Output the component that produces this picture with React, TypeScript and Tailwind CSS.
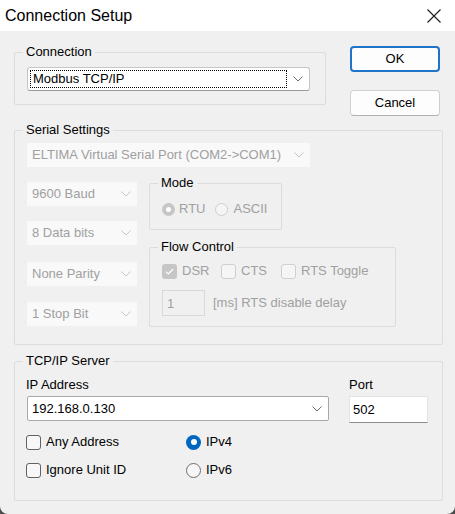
import type { ReactNode } from "react";
import clsx from "clsx";

const font = { fontFamily: '"Liberation Sans", Arial, sans-serif' };

function Chevron({ light }: { light?: boolean }) {
  return (
    <svg width="10" height="6" viewBox="0 0 10 6" className="shrink-0">
      <polyline
        points="0.5,0.5 5,5 9.5,0.5"
        fill="none"
        stroke={light ? "#c4c4c4" : "#6b6b6b"}
        strokeWidth="1"
      />
    </svg>
  );
}

function GroupBox({
  label,
  className,
  children,
}: {
  label: string;
  className?: string;
  children: ReactNode;
}) {
  return (
    <fieldset className={clsx("min-w-0 border border-[#dcdcdc] rounded-[2px]", className)}>
      <legend className="-ml-[4px] px-[3px] leading-4 text-[13px] text-black">{label}</legend>
      {children}
    </fieldset>
  );
}

// disabled combo (serial settings)
function DisabledCombo({ value, className }: { value: string; className?: string }) {
  return (
    <div
      className={clsx(
        "h-[24px] bg-[#f9f9f9] flex items-center justify-between pl-[5px] pr-[6px] text-[13px] text-[#a0a0a0]",
        className
      )}
    >
      <span>{value}</span>
      <Chevron light />
    </div>
  );
}

function Radio({ checked, disabled, size = 13 }: { checked?: boolean; disabled?: boolean; size?: number }) {
  if (disabled) {
    return (
      <span
        style={{ width: size, height: size }}
        className={clsx(
          "rounded-full shrink-0 flex items-center justify-center",
          checked ? "bg-[#c6c6c6]" : "border border-[#cfcfcf] bg-[#f5f5f5]"
        )}
      >
        {checked && <span className="w-[5px] h-[5px] rounded-full bg-white" />}
      </span>
    );
  }
  return (
    <span
      style={{ width: size, height: size }}
      className={clsx(
        "rounded-full shrink-0 flex items-center justify-center",
        checked ? "bg-[#0067c0]" : "border border-[#6e6e6e] bg-[#f6f6f6]"
      )}
    >
      {checked && <span className="w-[6px] h-[6px] rounded-full bg-white" />}
    </span>
  );
}

function CheckBox({ checked, disabled }: { checked?: boolean; disabled?: boolean }) {
  if (disabled && checked) {
    return (
      <span className="w-[15px] h-[15px] rounded-[3px] bg-[#c6c6c6] shrink-0 flex items-center justify-center">
        <svg width="9" height="7" viewBox="0 0 9 7">
          <polyline points="0.8,3.6 3.2,6 8.2,1" fill="none" stroke="#ffffff" strokeWidth="1.2" />
        </svg>
      </span>
    );
  }
  return (
    <span
      className={clsx(
        "w-[15px] h-[15px] rounded-[3px] border shrink-0",
        disabled ? "border-[#cfcfcf] bg-[#f5f5f5]" : "border-[#626262] bg-[#f7f7f7]"
      )}
    />
  );
}

export default function App() {
  return (
    <div className="w-[455px] h-[514px] bg-[#4d4d4d]" style={font}>
      <div className="w-full h-full bg-[#f0f0f0] rounded-b-[8px] overflow-hidden flex flex-col">
        {/* Title bar */}
        <div className="h-[31px] bg-white flex items-center justify-between pl-[5px] pr-[14px] shrink-0">
          <span className="text-[16px] text-black">Connection Setup</span>
          <svg width="14" height="14" viewBox="0 0 14 14">
            <path d="M0.5 0.5 L13.5 13.5 M13.5 0.5 L0.5 13.5" stroke="#1a1a1a" strokeWidth="1.1" />
          </svg>
        </div>

        <div className="pl-[14px] pr-[12px] pt-[13px] text-[13px] text-black">
          {/* Connection + buttons */}
          <div className="flex items-start">
            <GroupBox label="Connection" className="w-[312px] pl-[12px] pr-[15px] pt-[7px] pb-[13px]">
              <div className="h-[24px] bg-white border border-[#c6c6c6] border-b-[#9a9a9a] rounded-[3px] flex items-center justify-between pr-[6px]">
                <div className="ml-[2px] h-[18px] w-[257px] border border-dotted border-black flex items-center pl-[2px]">
                  Modbus TCP/IP
                </div>
                <Chevron />
              </div>
            </GroupBox>
            <div className="ml-[24px] w-[90px] pt-[2px] flex flex-col gap-[18px]">
              <button className="h-[26px] bg-[#fdfdfd] border-2 border-[#1f74c9] rounded-[4px] text-[13px] text-black">
                OK
              </button>
              <button className="h-[26px] bg-[#fdfdfd] border border-[#d0d0d0] border-b-[#b0b0b0] rounded-[4px] text-[13px] text-black">
                Cancel
              </button>
            </div>
          </div>

          {/* Serial Settings */}
          <GroupBox label="Serial Settings" className="mt-[6px] pl-[12px] pt-[5px] pb-[17px]">
            <DisabledCombo value="ELTIMA Virtual Serial Port (COM2->COM1)" className="w-[283px]" />
            <div className="flex mt-[8px]">
              <div className="w-[110px] pt-[7px] flex flex-col">
                <DisabledCombo value="9600 Baud" />
                <DisabledCombo value="8 Data bits" className="mt-[15px]" />
                <DisabledCombo value="None Parity" className="mt-[17px]" />
                <DisabledCombo value="1 Stop Bit" className="mt-[16px]" />
              </div>
              <div className="ml-[12px] flex flex-col">
                <GroupBox label="Mode" className="w-[133px] pl-[12px] pt-[10px] pb-[12px]">
                  <div className="h-[16px] flex items-center text-[#a0a0a0]">
                    <Radio checked disabled />
                    <span className="ml-[4px]">RTU</span>
                    <span className="ml-[10px]">
                      <Radio disabled />
                    </span>
                    <span className="ml-[5px]">ASCII</span>
                  </div>
                </GroupBox>
                <GroupBox label="Flow Control" className="mt-[9px] w-[247px] pl-[12px] pt-[8px] pb-[10px]">
                  <div className="h-[16px] flex items-center text-[#a0a0a0]">
                    <div className="w-[59px] flex items-center gap-[5px]">
                      <CheckBox checked disabled />
                      <span>DSR</span>
                    </div>
                    <div className="w-[60px] flex items-center gap-[5px]">
                      <CheckBox disabled />
                      <span>CTS</span>
                    </div>
                    <div className="flex items-center gap-[5px]">
                      <CheckBox disabled />
                      <span>RTS Toggle</span>
                    </div>
                  </div>
                  <div className="mt-[11px] flex items-center text-[#a0a0a0]">
                    <div className="w-[43px] h-[26px] border border-[#d9d9d9] pl-[4px] pt-[3px]">1</div>
                    <span className="ml-[8px]">[ms] RTS disable delay</span>
                  </div>
                </GroupBox>
              </div>
            </div>
          </GroupBox>

          {/* TCP/IP Server */}
          <GroupBox label="TCP/IP Server" className="mt-[8px] pl-[12px] pt-[8px] pb-[22px]">
            <div className="flex">
              <div className="w-[302px] flex flex-col">
                <span className="leading-4 -ml-[1px]">IP Address</span>
                <div className="mt-[3px] h-[25px] bg-white border border-[#a8a8a8] rounded-[2px] flex items-center justify-between pl-[4px] pr-[6px]">
                  <span>192.168.0.130</span>
                  <Chevron />
                </div>
              </div>
              <div className="ml-[20px] w-[79px] flex flex-col">
                <span className="leading-4">Port</span>
                <div className="mt-[3px] h-[27px] bg-white border border-[#e3e3e3] border-b-[#8c8c8c] flex items-center pl-[3px]">
                  502
                </div>
              </div>
            </div>
            <div className="mt-[11px] h-[16px] flex items-center -ml-[1px]">
              <div className="w-[160px] flex items-center gap-[5px]">
                <CheckBox />
                <span>Any Address</span>
              </div>
              <div className="flex items-center gap-[5px]">
                <Radio checked size={15} />
                <span>IPv4</span>
              </div>
            </div>
            <div className="mt-[12px] h-[16px] flex items-center -ml-[1px]">
              <div className="w-[160px] flex items-center gap-[5px]">
                <CheckBox />
                <span>Ignore Unit ID</span>
              </div>
              <div className="flex items-center gap-[5px]">
                <Radio size={15} />
                <span>IPv6</span>
              </div>
            </div>
          </GroupBox>
        </div>
      </div>
    </div>
  );
}
